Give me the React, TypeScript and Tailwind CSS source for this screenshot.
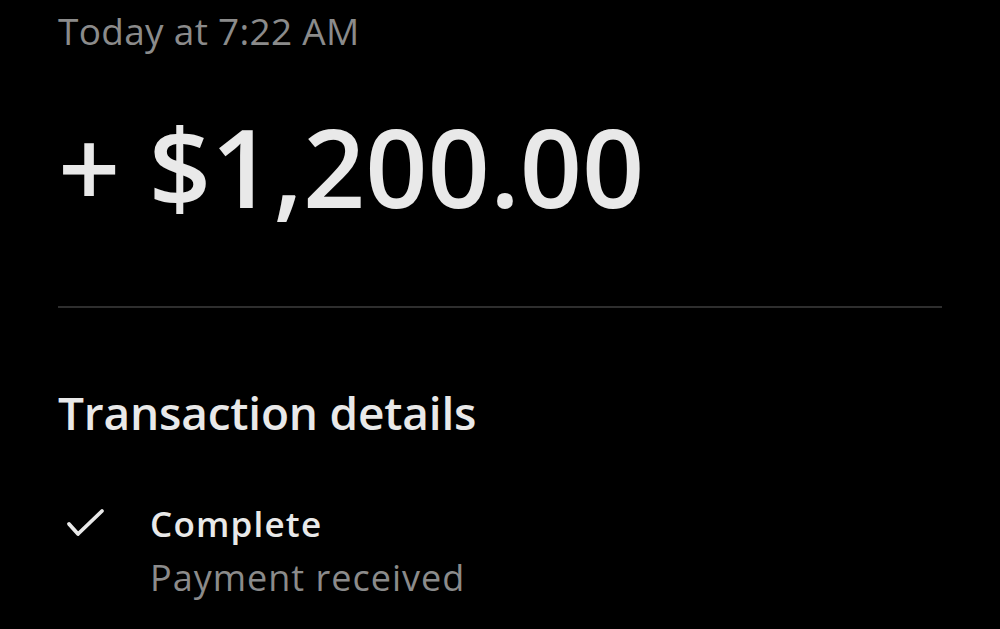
export default function App() {
  return (
    <div
      className="w-[1000px] h-[629px] bg-black overflow-hidden px-[58px] text-[#e9e9e9]"
      style={{ fontFamily: '"Open Sans", "Noto Sans", sans-serif' }}
    >
      <div className="pt-[6px] text-[37px] leading-[50px] tracking-[0.3px] text-[#8b8b8b]">Today at 7:22 AM</div>

      <div className="mt-[50px] text-[109px] leading-[120px] font-semibold">+ $1,200.00</div>

      <div className="mt-[80px] h-[2px] bg-[#2e2e2e]" />

      <h2 className="mt-[76px] text-[46px] leading-[56px] font-semibold tracking-[-0.2px]">Transaction details</h2>

      <div className="mt-[62px] flex gap-[44px]">
        <div className="pl-[8px] pt-[6px]">
          <svg width="40" height="30" viewBox="0 0 40 30" fill="none">
            <path
              d="M3 16 L12 26 L36 3"
              stroke="#e9e9e9"
              strokeWidth="3.8"
              strokeLinecap="round"
              strokeLinejoin="round"
            />
          </svg>
        </div>
        <div>
          <div className="text-[35px] leading-[44px] font-semibold tracking-[1.2px]">Complete</div>
          <div className="mt-[7px] text-[36px] leading-[50px] tracking-[1px] text-[#8b8b8b]">Payment received</div>
        </div>
      </div>
    </div>
  );
}
